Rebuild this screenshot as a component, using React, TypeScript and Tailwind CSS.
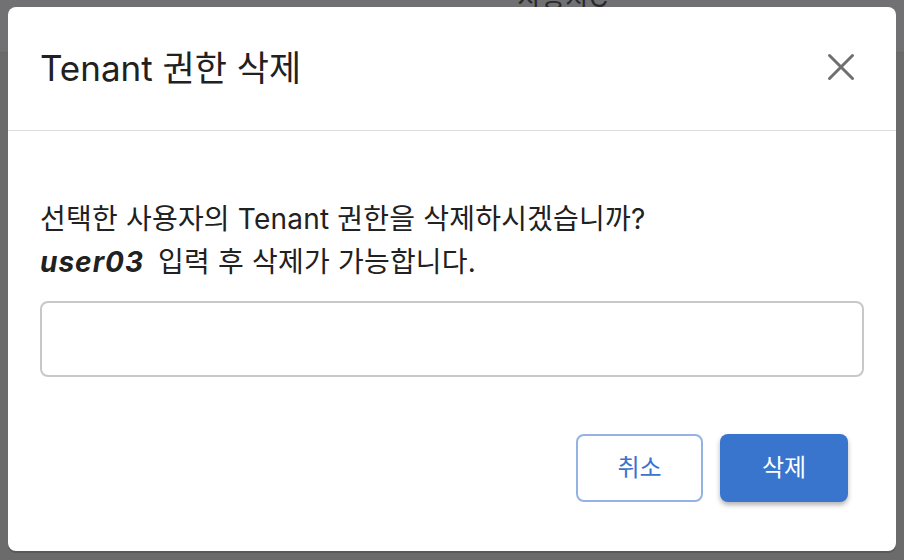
const font = { fontFamily: '"Inter", "Noto Sans CJK KR", sans-serif' };

const App = () => {
  return (
    <div className="relative w-full h-[560px] overflow-hidden bg-[#6b6b6b]" style={font}>
      {/* Page behind the dim layer */}
      <div className="h-[53px] bg-[#717174] border-b border-[#676767] flex justify-center">
        <span className="ml-[222px] -mt-[20px] text-[26px] leading-[36px] text-[#2a2a2a]">사용자C</span>
      </div>

      {/* Overlay + dialog */}
      <div className="absolute inset-0 pt-[7px] px-[8px]">
        <div className="w-[888px] h-[544px] bg-white rounded-[8px] flex flex-col shadow-[0_2px_0_#5a5a5a]">
          <div className="h-[124px] shrink-0 flex items-center justify-between pl-8 pr-[35px] border-b border-[#dcdcdc]">
            <h2 className="text-[35px] leading-[44px] text-[#212121] font-normal mb-[2px]">Tenant 권한 삭제</h2>
            <button type="button" className="w-[40px] h-[40px] flex items-center justify-center mb-[4px]">
              <svg width="28" height="28" viewBox="0 0 28 28" fill="none" stroke="#6f6f6f" strokeWidth="3" strokeLinecap="round">
                <path d="M2.5 2.5 L25.5 25.5 M25.5 2.5 L2.5 25.5" />
              </svg>
            </button>
          </div>

          <div className="flex flex-col px-8 pt-[67px]">
            <p className="text-[28px] leading-[43px] text-[#212121] tracking-[0.2px]">
              선택한 사용자의 Tenant 권한을 삭제하시겠습니까?
              <br />
              <span className="font-bold italic mr-[14px] tracking-[1px]">user03</span>
              입력 후 삭제가 가능합니다.
            </p>
            <input
              type="text"
              className="mt-[17px] h-[76px] w-full border-2 border-[#c8c8c8] rounded-[8px] px-4 text-[24px] outline-none"
            />
            <div className="flex justify-end gap-[17px] mt-[57px] pr-4">
              <button
                type="button"
                className="w-[127px] h-[68px] rounded-[8px] border-2 border-[#94b3e3] text-[#3b74cc] text-[24px] bg-white"
              >
                취소
              </button>
              <button
                type="button"
                className="w-[128px] h-[68px] rounded-[8px] bg-[#3975cd] text-white text-[24px] shadow-[0_3px_5px_rgba(0,0,0,0.3)]"
              >
                삭제
              </button>
            </div>
          </div>
        </div>
      </div>
    </div>
  );
};

export default App;
